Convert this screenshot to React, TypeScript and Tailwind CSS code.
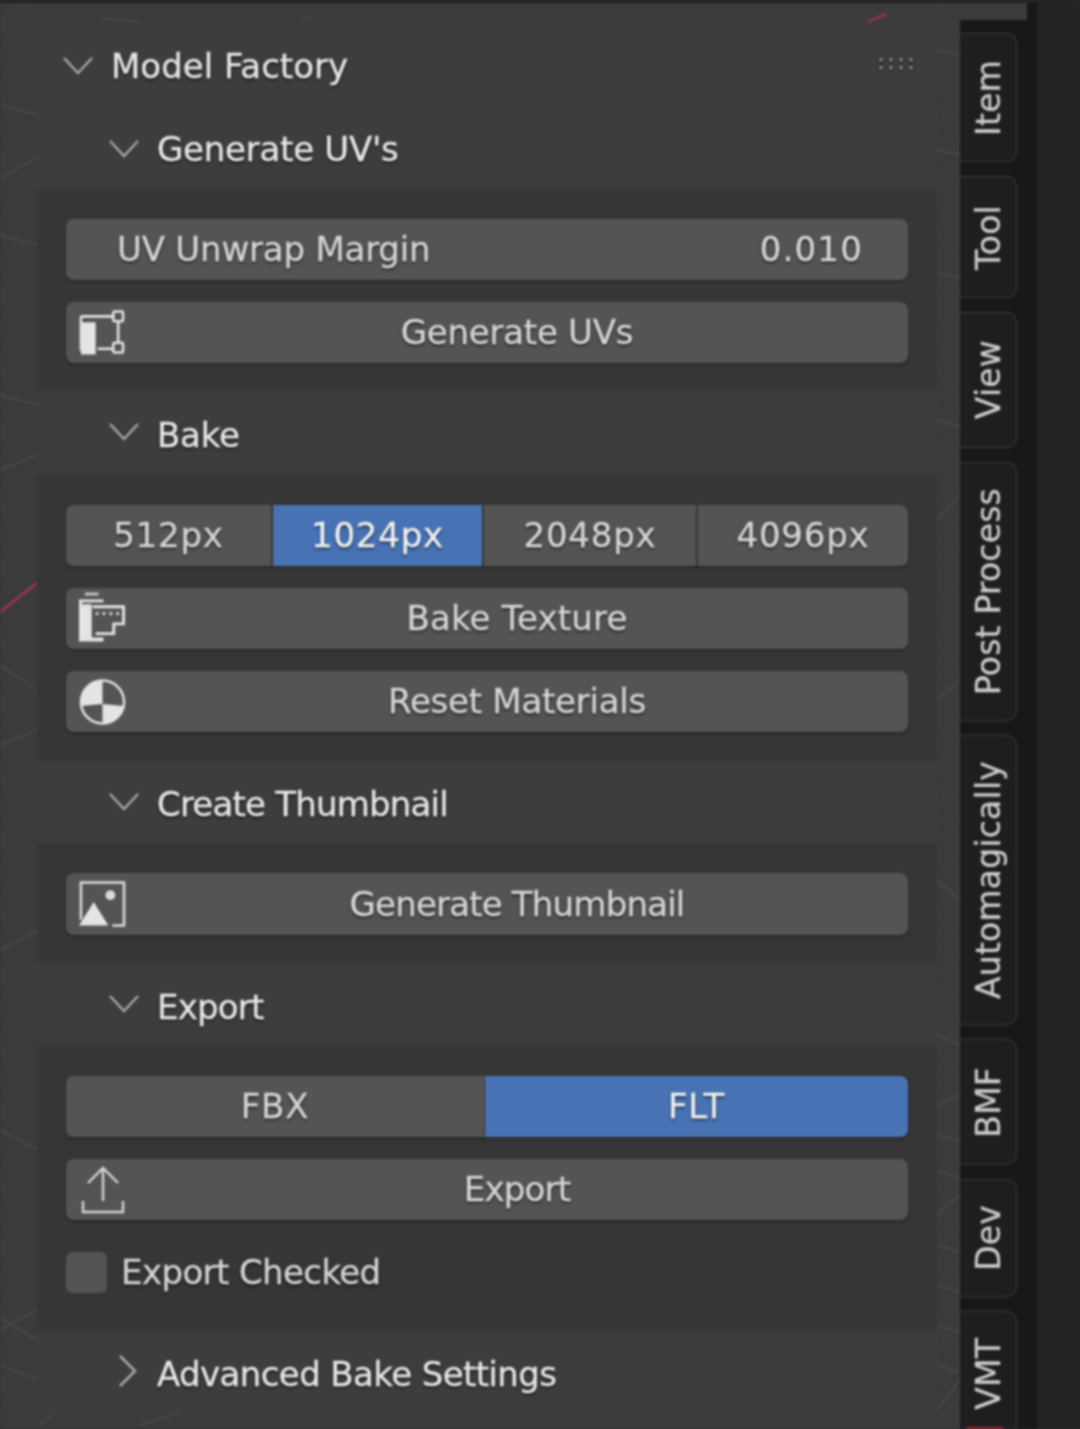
import type { ReactNode } from 'react';

const font = "[font-family:'DejaVu_Sans',sans-serif]";
const labelText =
  'text-[34px] [-webkit-text-stroke:0.3px_currentColor] [text-shadow:0_2px_3px_rgba(0,0,0,0.6)]';

function Chevron({ open = true }: { open?: boolean }) {
  if (!open) {
    return (
      <svg viewBox="0 0 20 32" className="ml-[9px] mr-[19px] h-[32px] w-[20px]" fill="none" stroke="#a8a8a8" strokeWidth="2.6">
        <path d="M2 1 L17 16 L2 31" />
      </svg>
    );
  }
  return (
    <svg viewBox="0 0 30 30" className="mr-[18px] h-[30px] w-[30px]" fill="none" stroke="#a8a8a8" strokeWidth="2.4">
      <path d="M1 7 L15 22 L29 7" />
    </svg>
  );
}

function UvIcon() {
  return (
    <svg viewBox="0 0 48 48" className="h-[48px] w-[48px]" fill="none" stroke="#e4e4e4" strokeWidth="2.6">
      <path d="M2 7 H36 M2 7 V42 M40 12 V34 M19 40 H35" />
      <path d="M2 14 Q2 13 3 13 H17 V46 H2 Z" fill="#e4e4e4" stroke="none" />
      <rect x="35" y="2" width="10" height="10" rx="1.5" />
      <rect x="35" y="34" width="10" height="10" rx="1.5" />
    </svg>
  );
}

function FilmIcon() {
  return (
    <svg viewBox="0 0 48 50" className="-mt-[3px] h-[50px] w-[48px]" fill="none">
      <path d="M6 0 H20 V3 H6 Z" fill="#c4c4c4" />
      <path d="M0 7 H25 V10 H3 V12 H13 V46 H25 V50 H0 Z" fill="#e4e4e4" />
      <path d="M14 14.5 H45.5 V32 H35.5 V42 H17" stroke="#e4e4e4" strokeWidth="3" />
      <g fill="#d0d0d0">
        <rect x="17" y="20" width="3" height="3" />
        <rect x="24" y="20" width="3" height="3" />
        <rect x="31" y="20" width="3" height="3" />
        <rect x="38" y="20" width="3" height="3" />
      </g>
    </svg>
  );
}

function MaterialIcon() {
  return (
    <svg viewBox="0 0 48 48" className="h-[48px] w-[48px]">
      <circle cx="24" cy="24" r="22" fill="none" stroke="#e4e4e4" strokeWidth="2.5" />
      <path d="M24 2 A22 22 0 0 0 2.5 28 L24 26 Z" fill="#e4e4e4" />
      <path d="M24 26 L45.5 28 A22 22 0 0 1 24 46 Z" fill="#e4e4e4" />
    </svg>
  );
}

function ImageIcon() {
  return (
    <svg viewBox="0 0 48 48" className="h-[48px] w-[48px]" fill="none">
      <path d="M2 40 V2 H46 V46 H34" stroke="#dcdcdc" strokeWidth="2.6" />
      <path d="M15 22 L30 46 H0 Z" fill="#e4e4e4" />
      <circle cx="32" cy="15" r="5" fill="#dcdcdc" />
    </svg>
  );
}

function ExportIcon() {
  return (
    <svg viewBox="0 0 44 50" className="h-[50px] w-[44px]" fill="none" stroke="#d6d6d6" strokeWidth="2.4">
      <path d="M22 36 V3 M7 18 L22 3 L37 18" />
      <path d="M2 36 V47 H42 V36" />
    </svg>
  );
}

function Header({
  label,
  top = false,
  closed = false,
  low = false,
  h,
  tracking = 'tracking-[-0.25px]',
}: {
  label: string;
  top?: boolean;
  closed?: boolean;
  low?: boolean;
  h: string;
  tracking?: string;
}) {
  return (
    <div className={`flex items-center bg-[#3d3d3d] ${h} ${top ? 'rounded-t-[10px] pl-[26px]' : 'pl-[72px]'}`}>
      <Chevron open={!closed} />
      <span className={`${labelText} ${tracking} text-[#e8e8e8] ${low ? 'pt-[6px]' : ''}`}>{label}</span>
    </div>
  );
}

function ActionButton({
  icon,
  label,
  h = 'h-[61px]',
  tracking = 'tracking-[-0.25px]',
}: {
  icon: ReactNode;
  label: string;
  h?: string;
  tracking?: string;
}) {
  return (
    <div className={`flex items-center rounded-[8px] bg-[#545454] shadow-[0_2px_3px_rgba(0,0,0,0.25)] ${h}`}>
      <div className="flex w-[60px] items-center justify-center pl-[13px]">{icon}</div>
      <div className={`flex-1 text-center text-[#d6d6d6] ${labelText} ${tracking}`}>{label}</div>
    </div>
  );
}

function Segment({ label, active, className }: { label: string; active?: boolean; className: string }) {
  return (
    <div
      className={`flex items-center justify-center text-[34px] tracking-[0.8px] [-webkit-text-stroke:0.3px_currentColor] [text-shadow:0_2px_3px_rgba(0,0,0,0.6)] ${className} ${
        active ? 'bg-[#4772b3] text-[#f2f2f2]' : 'bg-[#545454] text-[#d6d6d6]'
      }`}
    >
      {label}
    </div>
  );
}

const tabs = [
  { label: 'Item', h: 'h-[129px]' },
  { label: 'Tool', h: 'h-[122px]' },
  { label: 'View', h: 'h-[136px]' },
  { label: 'Post Process', h: 'h-[259px]' },
  { label: 'Automagically', h: 'h-[290px]' },
  { label: 'BMF', h: 'h-[126px]' },
  { label: 'Dev', h: 'h-[118px]' },
  { label: 'VMT', h: 'h-[125px]' },
];

// faint hatch of the viewport floor, only seen in the gutters
const hatch: string[] = [];
for (let y = -40; y < 1460; y += 34) {
  hatch.push(`M0 ${y} L37 ${y + 22}`, `M0 ${y + 26} L37 ${y + 2}`);
  hatch.push(`M937 ${y + 8} L960 ${y + 22}`, `M937 ${y + 30} L960 ${y + 12}`);
}

export default function App() {
  return (
    <div className="h-[1429px] w-[1080px] overflow-hidden bg-[#303030]">
      <div className={`relative h-[1429px] w-[1080px] overflow-hidden bg-[#3b3b3b] blur-[1px] ${font}`}>
        {/* viewport grid behind the panels */}
        <svg className="absolute inset-0 h-full w-full" viewBox="0 0 1080 1429" fill="none" stroke="#4b4b4b" strokeWidth="1.5">
          <path d={hatch.join(' ')} stroke="#414141" strokeWidth="1" />
          <path d="M0 105 L37 115 M0 178 L37 158 M0 235 L37 245 M0 395 L37 405 M0 470 L37 455 M0 665 L37 690 M0 745 L37 730 M0 950 L37 930 M0 1130 L37 1150 M0 1318 L37 1340 M0 1365 L37 1380 M0 1330 L37 1310" />
          <path d="M937 50 L960 55 M937 150 L960 155 M937 272 L960 278 M937 420 L960 426 M937 520 L960 495 M937 700 L960 680 M937 880 L960 900 M937 1035 L960 1045 M937 1105 L960 1095 M937 1135 L960 1142 M937 1170 L960 1178 M937 1215 L960 1195 M937 1245 L960 1252 M937 1285 L960 1292 M937 1325 L960 1332 M937 1365 L960 1372 M937 1410 L960 1380" />
          <path d="M100 18 L140 22 M300 20 L312 16 M40 1425 L55 1412 M140 1425 L180 1412" />
          <path d="M0 612 L37 583" stroke="#8f3545" strokeWidth="3" />
          <path d="M868 22 L886 14" stroke="#8f3545" strokeWidth="3" />
        </svg>

        <div className="relative flex h-full flex-col">
          <div className="h-[3px] bg-[#222222]" />
          <div className="flex min-h-0 flex-1">
            {/* sidebar panel */}
            <div className="ml-[37px] mt-[21px] w-[900px]">
              <div className="relative">
                <Header label="Model Factory" top h="h-[84px]" tracking="tracking-[0px]" />
                <svg viewBox="0 0 36 16" className="absolute right-[22px] top-[33px] h-[16px] w-[36px]">
                  {[2, 12, 22, 32].map((x) => (
                    <g key={x}>
                      <circle cx={x} cy="4" r="2" fill="#1c1c1c" />
                      <circle cx={x} cy="12" r="2" fill="#1c1c1c" />
                      <circle cx={x} cy="3" r="1.4" fill="#b0b0b0" />
                      <circle cx={x} cy="11" r="1.4" fill="#b0b0b0" />
                    </g>
                  ))}
                </svg>
              </div>
              <Header label="Generate UV's" h="h-[82px]" />
              <div className="flex flex-col gap-[22px] bg-[#363636] px-[29px] pb-[27px] pt-[29px]">
                <div className={`flex h-[61px] items-center justify-between rounded-[8px] bg-[#545454] pl-[51px] pr-[45px] tracking-[-0.2px] text-[#d6d6d6] shadow-[0_2px_3px_rgba(0,0,0,0.25)] ${labelText}`}>
                  <span>UV Unwrap Margin</span>
                  <span className="tracking-[1.2px]">0.010</span>
                </div>
                <ActionButton icon={<UvIcon />} label="Generate UVs" />
              </div>

              <Header label="Bake" low h="h-[84px]" />
              <div className="flex flex-col gap-[22px] bg-[#363636] px-[29px] pb-[28px] pt-[31px]">
                <div className="flex h-[61px] gap-[2px] shadow-[0_2px_3px_rgba(0,0,0,0.25)]">
                  <Segment label="512px" className="w-[205px] rounded-l-[8px]" />
                  <Segment label="1024px" active className="w-[209px]" />
                  <Segment label="2048px" className="w-[212px]" />
                  <Segment label="4096px" className="flex-1 rounded-r-[8px]" />
                </div>
                <ActionButton icon={<FilmIcon />} label="Bake Texture" tracking="tracking-[0.2px]" />
                <ActionButton icon={<MaterialIcon />} label="Reset Materials" />
              </div>

              <Header label="Create Thumbnail" low h="h-[83px]" tracking="tracking-[-0.8px]" />
              <div className="bg-[#363636] px-[29px] pb-[27px] pt-[30px]">
                <ActionButton icon={<ImageIcon />} label="Generate Thumbnail" h="h-[62px]" tracking="tracking-[-0.8px]" />
              </div>

              <Header label="Export" low h="h-[84px]" tracking="tracking-[-0.8px]" />
              <div className="bg-[#363636] px-[29px] pb-[37px] pt-[30px]">
                <div className="flex h-[61px] shadow-[0_2px_3px_rgba(0,0,0,0.25)]">
                  <Segment label="FBX" className="w-[418px] rounded-l-[8px]" />
                  <Segment label="FLT" active className="ml-[1px] flex-1 rounded-r-[8px]" />
                </div>
                <div className="mt-[22px]">
                  <ActionButton icon={<ExportIcon />} label="Export" tracking="tracking-[-0.8px]" />
                </div>
                <div className="mt-[32px] flex h-[41px] items-center gap-[14px]">
                  <div className="h-[41px] w-[41px] rounded-[7px] bg-[#545454]" />
                  <span className={`tracking-[-0.6px] text-[#d6d6d6] ${labelText}`}>Export Checked</span>
                </div>
              </div>

              <div className="rounded-b-[10px] bg-[#3d3d3d]">
                <Header label="Advanced Bake Settings" closed low h="h-[82px]" tracking="tracking-[-0.6px]" />
              </div>
            </div>

            <div className="w-[23px]" />

            {/* region tabs */}
            <div className="flex w-[77px] flex-col">
              <div className="flex h-[17px] shrink-0 justify-end">
                <div className="w-[10px] bg-[#181818]" />
              </div>
              <div className="relative flex min-h-0 flex-1 flex-col gap-[14px] overflow-hidden bg-[#181818] pt-[13px]">
                {tabs.map((tab) => (
                  <div
                    key={tab.label}
                    className={`flex w-[57px] shrink-0 items-center justify-center rounded-r-[10px] border border-l-0 border-[#3a3a3a] bg-[#1e1e1e] ${tab.h}`}
                  >
                    <span className="rotate-180 text-[33px] leading-none tracking-[0.2px] text-[#cccccc] [-webkit-text-stroke:0.3px_currentColor] [writing-mode:vertical-rl]">
                      {tab.label}
                    </span>
                  </div>
                ))}
                <div className="absolute bottom-0 left-[6px] h-[2px] w-[38px] rounded-t-full bg-[#a11f2e]" />
              </div>
            </div>
            <div className="w-[43px] bg-[#232323]" />
          </div>
        </div>
      </div>
    </div>
  );
}
